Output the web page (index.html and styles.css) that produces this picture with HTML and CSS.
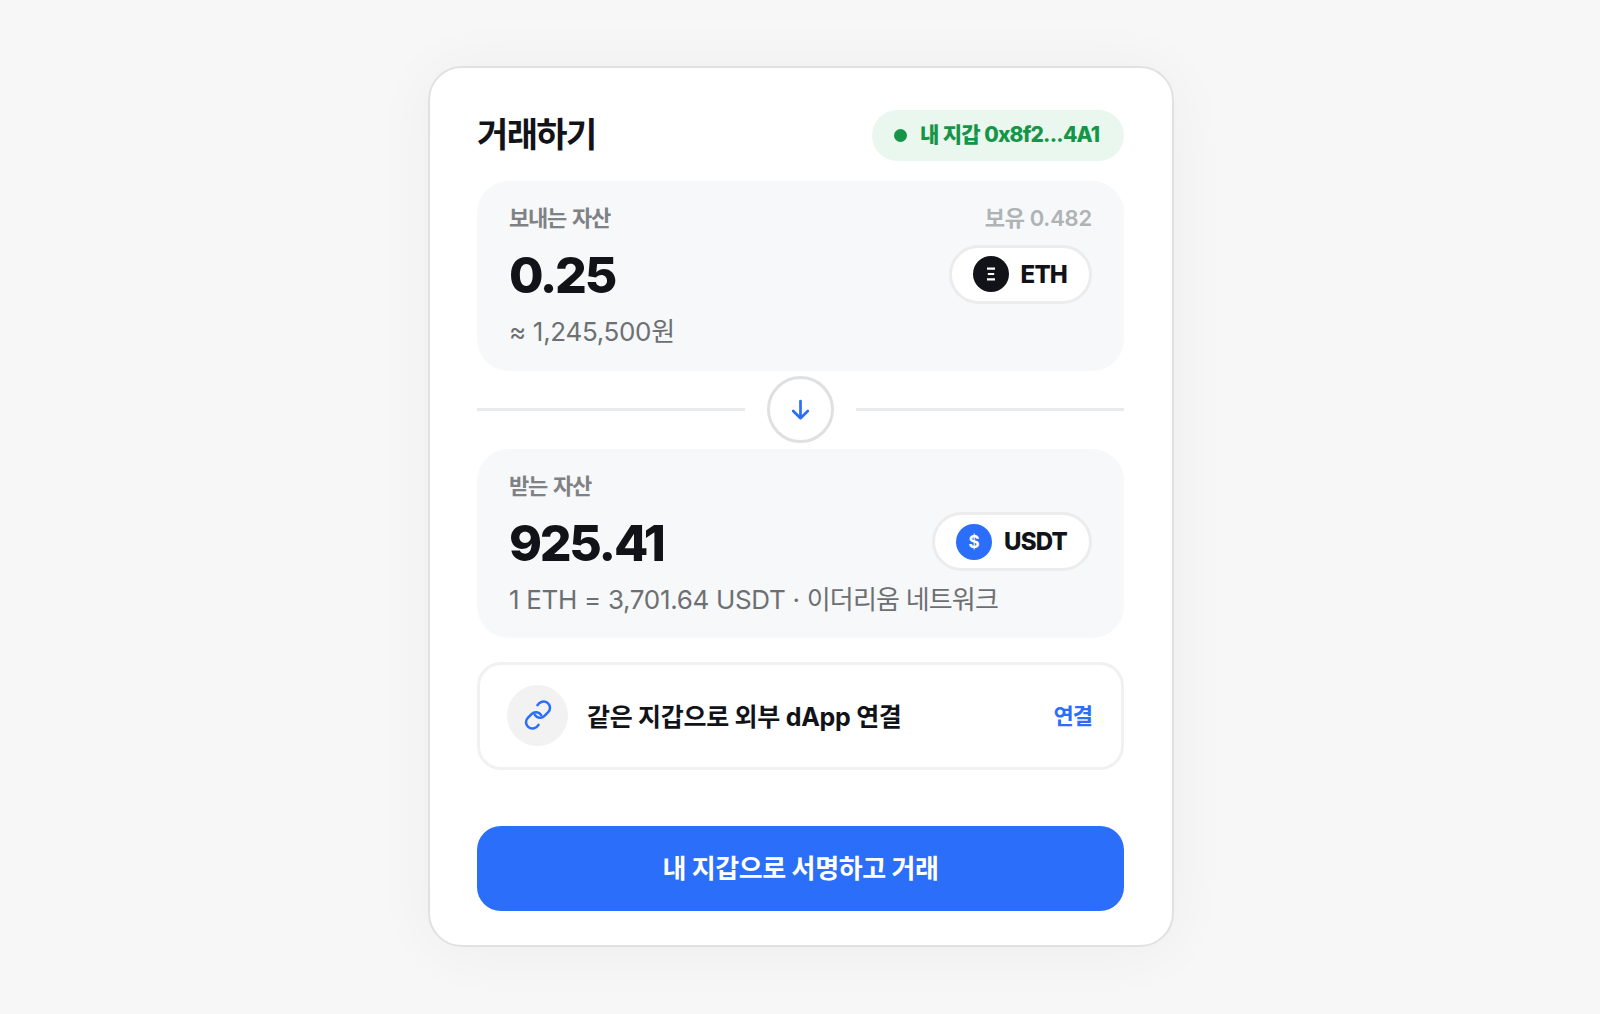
FILE: index.html
```html
<!DOCTYPE html>
<html lang="ko">
<head>
<meta charset="utf-8">
<title>거래하기</title>
<link rel="stylesheet" href="styles.css">
</head>
<body>
<main class="card">
  <header class="head">
    <h1 class="title">거래하기</h1>
    <div class="wallet"><i class="dot"></i><span>내 지갑 0x8f2...4A1</span></div>
  </header>
  <section class="asset">
    <div class="asset-top"><span>보내는 자산</span><span class="balance">보유 0.482</span></div>
    <div class="asset-main">
      <span class="amount">0.25</span>
      <div class="token"><span class="coin coin-eth"><svg width="10" height="14" viewBox="0 0 10 14" fill="none" stroke="#fff" stroke-width="2.2"><path d="M1 1.6h8M1.8 7h6.4M1 12.4h8"/></svg></span><span>ETH</span></div>
    </div>
    <div class="note">≈ 1,245,500원</div>
  </section>
  <div class="divider">
    <div class="swap"><svg width="20" height="22" viewBox="0 0 20 22" fill="none" stroke="#2b6ef9" stroke-width="2.7" stroke-linecap="round" stroke-linejoin="round"><path d="M9.500 2v17.2M2.200 12l7.3 7.2 7.3-7.2"/></svg></div>
  </div>
  <section class="asset">
    <div class="asset-top"><span>받는 자산</span></div>
    <div class="asset-main">
      <span class="amount">925.41</span>
      <div class="token"><span class="coin coin-usdt">$</span><span>USDT</span></div>
    </div>
    <div class="note">1 ETH = 3,701.64 USDT · <span class="network">이더리움 네트워크</span></div>
  </section>
  <div class="connect">
    <div class="link-icon"><svg width="30" height="30" viewBox="0 0 90 90" fill="none" stroke="#2b6ef9" stroke-width="7.6" stroke-linecap="round" stroke-linejoin="round"><path d="M43.5 15.5C49.5 5.500 63.500-.5 74.500 9.500C83.500 17.500 82.500 29.500 75.500 36.500L64.500 47.500C55.500 56.500 41.500 54.500 35.500 44.500"/><path d="M46.500 74.500C40.500 84.500 26.500 90.500 15.500 80.500C6.500 72.500 7.500 60.500 14.500 53.500L25.500 42.500C34.500 33.500 48.500 35.500 54.500 45.500"/></svg></div>
    <span class="connect-text">같은 지갑으로 외부 dApp 연결</span>
    <span class="connect-action">연결</span>
  </div>
  <button class="submit">내 지갑으로 서명하고 거래</button>
</main>
</body>
</html>
```
FILE: styles.css
```css
* { box-sizing: border-box; }
body {
  margin: 0;
  height: 1014px;
  padding: 66px 426px 67px 428px;
  background: #f7f7f7;
  color: #121319;
  font-family: Inter, "Noto Sans CJK KR", sans-serif;
  overflow: hidden;
}
.card {
  width: 746px;
  height: 881px;
  padding: 42px 48px 34px 47px;
  display: flex;
  flex-direction: column;
  background: #fff;
  border: 2px solid #e1e1e2;
  border-radius: 34px;
  box-shadow: 0 4px 64px rgba(0, 0, 0, 0.045);
}
.head { height: 51px; display: flex; align-items: center; justify-content: space-between; margin-bottom: 20px; }
.title { margin: 0; font-size: 34px; line-height: 50px; font-weight: 700; letter-spacing: -1.6px; transform: translateY(-1px); }
.wallet {
  width: 252px; height: 51px; padding-left: 22px; display: flex; align-items: center; gap: 13px;
  border-radius: 26px; background: #e9f7ee; color: #169447;
  font-size: 21px; line-height: 30px; font-weight: 800; letter-spacing: -0.8px; word-spacing: 0.5px; white-space: nowrap;
}
.wallet span { margin-top: -1px; }
.dot { width: 13px; height: 13px; border-radius: 50%; background: #169447; }
.asset { height: 190px; padding: 20px 32px; border-radius: 32px; background: #f7f8fa; }
.asset-top { height: 34px; display: flex; align-items: center; justify-content: space-between; font-size: 22px; line-height: 34px; font-weight: 600; color: #7f8284; letter-spacing: -1.3px; word-spacing: 2px; }
.balance { color: #aeb3b4; letter-spacing: -0.2px; word-spacing: -0.5px; }
.asset-main { height: 78px; display: flex; align-items: center; justify-content: space-between; }
.amount { padding-top: 2px; font-size: 50px; line-height: 60px; font-weight: 800; letter-spacing: -2.3px; }
.token { height: 59px; padding: 0 22px 0 21px; display: flex; align-items: center; gap: 12px; border: 3px solid #ececed; border-radius: 30px; background: #fff; font-size: 24px; font-weight: 800; letter-spacing: -0.8px; }
.coin { width: 36px; height: 36px; display: flex; align-items: center; justify-content: center; border-radius: 50%; color: #fff; font-size: 17px; font-weight: 700; letter-spacing: 0; }
.coin-eth { background: #121319; }
.coin-usdt { background: #2b6ef9; }
.note { height: 36px; font-size: 26px; line-height: 38px; letter-spacing: -0.32px; color: #6d7072; white-space: nowrap; }
.network { letter-spacing: -0.8px; }
.divider { height: 78px; display: flex; align-items: center; gap: 22px; }
.divider::before, .divider::after { content: ""; flex: 1; height: 3px; background: #e9eaeb; }
.swap { width: 67px; height: 67px; display: flex; align-items: center; justify-content: center; border: 3px solid #dfe0e2; border-radius: 50%; }
.connect { height: 108px; margin: 24px 0 56px; padding: 0 29px 2px 27px; display: flex; align-items: center; border: 3px solid #f1f1f2; border-radius: 24px; }
.link-icon { width: 61px; height: 61px; margin-right: 19px; display: flex; align-items: center; justify-content: center; border-radius: 50%; background: #f2f2f2; }
.connect-text { font-size: 25px; font-weight: 700; letter-spacing: -0.28px; }
.connect-action { margin-left: auto; padding-bottom: 2px; color: #2b6ef9; font-size: 22px; font-weight: 700; letter-spacing: -1px; }
.submit { height: 85px; flex: none; padding: 0 0 4px; border: 0; border-radius: 24px; background: #2b6ef9; color: #fff; font: inherit; font-size: 26px; font-weight: 700; letter-spacing: -0.4px; }
```
